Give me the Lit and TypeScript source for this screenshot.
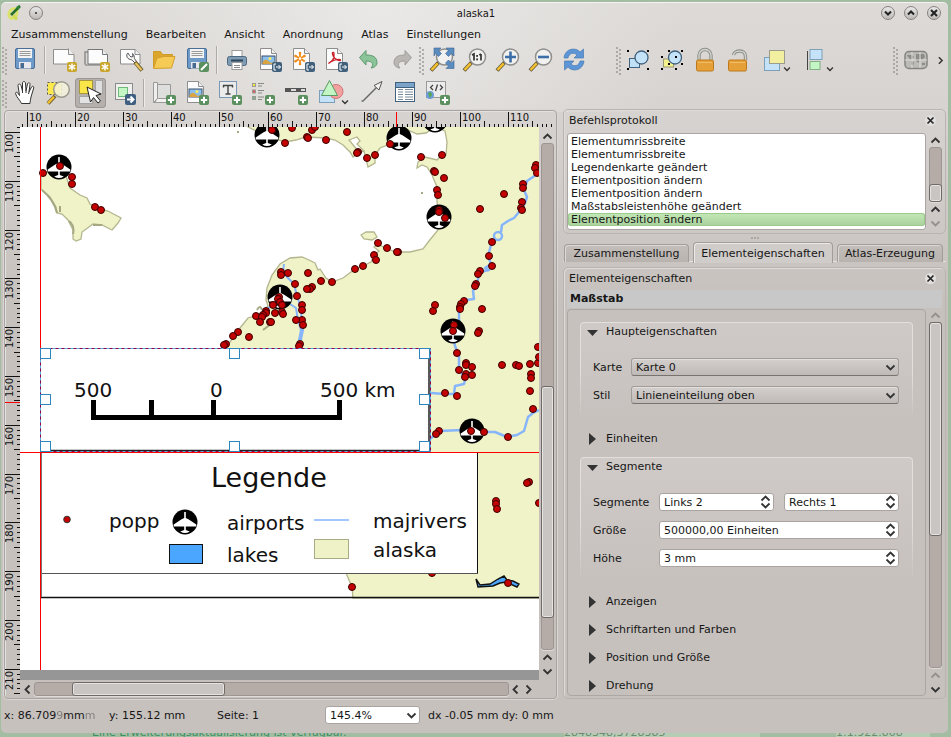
import { LitElement, html, svg, css } from "lit";
import { customElement, property } from "lit/decorators.js";
import { classMap } from "lit/directives/class-map.js";

/* ---------- icons (24 x 24) ---------- */

const plus = svg`<rect x="14" y="14" width="10" height="10" rx="2" fill="#5b8f5e"/><path d="M19 15.800v6.400M15.800 19h6.400" stroke="#fff" stroke-width="2"/>`;
const star = svg`<rect x="14" y="14" width="10" height="10" rx="2" fill="#c9a62c"/><path d="M19 15.500v7M15.800 17.200l6.400 3.600M22.200 17.200l-6.400 3.600" stroke="#fff" stroke-width="1.500"/>`;
const exportBadge = svg`<rect x="14" y="14" width="10" height="10" rx="2" fill="#41607c"/><path d="M18 16h-2v6h2M18 19h4.500M20.500 17l2 2-2 2" stroke="#fff" fill="none"/>`;
const page = svg`<path d="M2.500 .5h11l5 5v16h-16z" fill="#fcfcfc" stroke="#8d8d8d"/><path d="M13.500 .5v5h5" fill="#eee" stroke="#8d8d8d"/>`;
const disk = svg`<rect x="2.500" y=".5" width="19" height="20" rx="1.500" fill="#6d9ac8" stroke="#4a6d95"/><rect x="5" y="1" width="14" height="9" fill="#f3f3f3"/><path d="M6.500 3.500h11M6.500 5.500h11M6.500 7.500h11" stroke="#9a9a9a"/><rect x="6" y="14" width="12" height="6.500" fill="#e8e8ee"/><rect x="7.500" y="15" width="3.500" height="5" fill="#46698f"/>`;
const lens = (inner: unknown) => svg`<path d="M1 22.500l8-8.500" stroke="#5f5433" stroke-width="4"/><path d="M1.500 22l6.200-6.600" stroke="#f5c22e" stroke-width="2.400"/><circle cx="14.500" cy="9" r="8" fill="#f1f1ef" stroke="#8e8e8c" stroke-width="1.500"/>${inner}`;
const picture = svg`<rect x="4" y="8" width="13" height="8" fill="#8ac0ef" stroke="#38516b"/><path d="M4.500 14c3-4 5-2 7 0s4 0 5-1v3h-12z" fill="#d9a441"/><circle cx="12" cy="10.500" r="1.500" fill="#ffe95a"/>`;
const corners = (x: number, y: number, w: number, h: number) =>
  [[x, y], [x + w, y], [x, y + h], [x + w, y + h]].map(([a, b]) => svg`<rect x=${a - 1} y=${b - 1} width="2" height="2"/>`);

const ICONS: Record<string, unknown> = {
  save: disk,
  new: svg`<path d="M.5 1.500h15l5.500 5v9.500H.5z" fill="#fcfcfc" stroke="#8d8d8d"/><path d="M15.500 .5v6H21" fill="#eee" stroke="#8d8d8d"/>${star}`,
  duplicate: svg`<path d="M-1 16.500V4h3" fill="none" stroke="#8d8d8d" stroke-width="1.500"/><path d="M2 1.500h14.500l5 5v9.500H2z" fill="#fcfcfc" stroke="#777"/><path d="M16.500 1v5.500h5" fill="#eee" stroke="#777"/><path d="M-1 17h17" stroke="#777"/>${star}`,
  manage: svg`<path d="M1.500 1.500h15l4.500 5v9.500H1.500z" fill="#fcfcfc" stroke="#8d8d8d"/><path d="M16 1v5.500h5" fill="#eee" stroke="#8d8d8d"/><path d="M9 5c-2 1-1.500 5 1 6 2 1 3 .5 4 2l2 2 1.500-1.500-2-3C15 9 15.500 7 13.500 5.500l.5 3-2 .5-1.500-1.500z" fill="#f5f5f5" stroke="#555"/><path d="M16 14l7 8.500" stroke="#6d6034" stroke-width="4"/><path d="M16.500 15l6 7" stroke="#ecc65a" stroke-width="2"/>`,
  open: svg`<path d="M1.500 20V3.500h7l2 3h10V9" fill="#dca52c" stroke="#cf9a26"/><path d="M1.500 20.500L5 10l7-1.500h11L19.500 20z" fill="#f5ca55" stroke="#d3a02e"/>`,
  savetpl: svg`${disk}<rect x="14" y="14" width="10" height="10" rx="2" fill="#5b8f5e"/><path d="M16 22l6-6" stroke="#fff" stroke-width="2"/>`,
  print: svg`<rect x="7" y="2.500" width="10" height="7" fill="#fff" stroke="#9a9a9a"/><rect x="2.500" y="8.500" width="19" height="9" rx="2" fill="#7f9cb5" stroke="#4d687f"/><path d="M6 12.500h12" stroke="#2f4659" stroke-width="2"/><rect x="7" y="14.500" width="10" height="7" fill="#fff" stroke="#9a9a9a"/><path d="M9 17.500h6M9 19.500h6" stroke="#888"/>`,
  image: svg`${page}${picture}${exportBadge}`,
  svgout: svg`${page}<path d="M9 5v11M4.200 7.800l9.600 5.600M13.800 7.800l-9.600 5.600" stroke="#f08c1a" stroke-width="1.800"/><circle cx="9" cy="5" r="1.300" fill="#f08c1a"/><circle cx="9" cy="16" r="1.300" fill="#f08c1a"/><circle cx="4.500" cy="8" r="1.300" fill="#f08c1a"/><circle cx="13.500" cy="8" r="1.300" fill="#f08c1a"/><circle cx="4.500" cy="13.300" r="1.300" fill="#f08c1a"/><circle cx="9" cy="10.600" r="1.300" fill="#fff"/>${exportBadge}`,
  pdf: svg`${page}<path d="M4.500 15.500c4-2 6-6 5.500-10-.2-1.800-2-1.500-1.500.5 1 4 3.500 6 7 6.500 1.500.2 1.200-1.300-.5-1.200-4 .2-7.500 1.200-10.500 4.200z" fill="none" stroke="#c8202a" stroke-width="1.300"/>${exportBadge}`,
  undo: svg`<path d="M2.500 9.500L9 2.500V7c7 0 11 2 11 8 0 2.500-3 5-6 5 2.500-2.500 3-7-5-7v4z" fill="#8cc49a" stroke="#5d9a6d"/>`,
  redo: svg`<path d="M21.500 9.500L15 2.500V7C8 7 4 9 4 15c0 2.500 3 5 6 5-2.500-2.500-3-7 5-7v4z" fill="#b9b6b3" stroke="#a09d9a"/>`,
  zoomfull: svg`${lens("")}<path d="M4 0h7L8.500 2.500l3 3-3 3-3-3L4 8z M24 0v8l-2.500-2.500-3 3-3-3 3-3L16 0z M24 20.500h-8l2.500-2.500-3-3 3-3 3 3L24 12.500z" fill="#5a8cc0" stroke="#3c6796" stroke-width=".6"/>`,
  zoomone: svg`${lens(svg`<path d="M9 7l2-1v6.500M18 6v6.500M16.300 7l1.700-1" fill="none" stroke="#333" stroke-width="1.700"/><rect x="13.200" y="7" width="1.800" height="1.800" fill="#333"/><rect x="13.200" y="10.500" width="1.800" height="1.800" fill="#333"/>`)}`,
  zoomin: lens(svg`<path d="M14.500 3.500v11M9 9h11" stroke="#3c6ea8" stroke-width="2.600"/>`),
  zoomout: lens(svg`<path d="M9 9h11" stroke="#3c6ea8" stroke-width="2.600"/>`),
  refresh: svg`<path d="M2 10C3 0 14-1 18 4l3.500-3v9H12l3-3C12 4 7 5 6 10z" fill="#5d96d6" stroke="#3d70aa" stroke-width=".6"/><path d="M22 13c-1 10-12 11-16 6l-3.500 3v-9H12l-3 3c3 3 8 2 9-3z" fill="#5d96d6" stroke="#3d70aa" stroke-width=".6"/>`,
  group: svg`<rect x="2.500" y="10.500" width="10" height="9" fill="#bfe0f7" stroke="#41627e"/><circle cx="14.500" cy="9.500" r="6.500" fill="#c4e2f8" stroke="#41627e" stroke-width="1.300"/>${corners(1, 3, 20, 18)}`,
  ungroup: svg`<rect x="3.500" y="11" width="10" height="8" fill="#f5f08e" stroke="#9a9a70"/><circle cx="15" cy="9.500" r="6.500" fill="#c4e2f8" stroke="#41627e" stroke-width="1.300"/>${corners(9, 3, 13, 13)}${corners(2, 9, 14, 12)}`,
  lock: svg`<path d="M6 12V7.500a6 6 0 0 1 12 0V12" fill="none" stroke="#8f918b" stroke-width="3.400"/><path d="M6 12V7.500a6 6 0 0 1 12 0V12" fill="none" stroke="#d5d6d0" stroke-width="1.300"/><rect x="3.500" y="12" width="17" height="11" rx="1.500" fill="#e6a038" stroke="#bd7a1d"/><path d="M5 14.500h14" stroke="#f2bd68"/>`,
  unlock: svg`<path d="M7.500 7c1-5 12-6 12 1.500V12" fill="none" stroke="#8f918b" stroke-width="3.400"/><path d="M7.500 7c1-5 12-6 12 1.500V12" fill="none" stroke="#d5d6d0" stroke-width="1.300"/><rect x="2.500" y="12" width="18" height="11" rx="1.500" fill="#e6a038" stroke="#bd7a1d"/><path d="M4 14.500h15" stroke="#f2bd68"/>`,
  raise: svg`<rect x="1.500" y="9.500" width="15" height="13" fill="#c4e2f8" stroke="#7da0ba"/><rect x="6.500" y="2.500" width="15" height="13" fill="#f2f0a0" stroke="#9c9c8c"/>`,
  align: svg`<path d="M1.500 3v19" stroke="#444"/><rect x="4" y="1.500" width="12" height="10" fill="#c4e2f8" stroke="#7da0ba"/><rect x="4" y="13.500" width="10" height="8" fill="#c4f5c4" stroke="#83ad83"/>`,
  atlas: svg`<rect x="1" y="3.500" width="22" height="17" rx="4" fill="#bdbbb8" stroke="#858381" stroke-width="1.500"/><path d="M3 7h5l2 2-3 3-2-2zM7 13l3 1-1 4-2-2zM12 6h8l1 3-3 3-2-2-1 5-3-2zM18 15h3v2h-3z" fill="#8d8b88"/><path d="M8 4v16M16 4v16M1 12h22" stroke="#e0dedb"/>`,
  hand: svg`<path d="M8.500 22.500c-1-3-5-6-6-10 0-2 2-1.500 3 .5l1 1.500L5 4.500c0-2 2.500-2 3 0L9.500 10V2c0-2 2.800-2 3 0l.5 8 1.500-7c.5-2 2.800-1.500 2.500.5L16 11l2.500-5c1-1.500 2.800-.5 2.200 1L18 16c-.5 3-1 5-1 6.500z" fill="#fff" stroke="#333"/><path d="M9.500 10v2M13 10v2M16 11l-.5 2" stroke="#333"/>`,
  zoomtool: svg`<rect x="1.500" y="1.500" width="14" height="12" fill="#fbe94e" stroke="#555" stroke-dasharray="2 2"/><path d="M2 22.500l7-7.500" stroke="#6d5c30" stroke-width="4"/><path d="M2 22.300l6-6.500" stroke="#f5c22e" stroke-width="2.400"/><circle cx="15.500" cy="8.500" r="7.800" fill="#f3f1dc" fill-opacity=".88" stroke="#9b9a8e" stroke-width="1.500"/>`,
  select: svg`<rect x=".5" y="-.5" width="13" height="13" fill="#fbe64a" stroke="#a6983a"/><rect x="16.500" y="-.5" width="7" height="13" fill="#dedede" stroke="#a3a3a3"/><rect x=".5" y="15.500" width="13" height="7" fill="#e2e2e2" stroke="#a3a3a3"/><path d="M8 6l3.500 15 3-4.500 4.500 5.500 2.500-2-4.500-5.500 5-1.500z" fill="#fff" stroke="#222"/>`,
  move: svg`<rect x="3.500" y="2.500" width="17" height="16" fill="#f0f0ee" stroke="#8a8a8a"/><rect x="6.500" y="6.500" width="9" height="9" fill="#c4f7c4" stroke="#6fb77a"/><rect x="13" y="13" width="11" height="11" rx="2" fill="#3e5f80"/><path d="M15 18.500h6M18.500 15.500l3 3-3 3" fill="none" stroke="#fff" stroke-width="2"/>`,
  addmap: svg`<path d="M1.500 1.500h4v17h-1l-3 3z" fill="#eeeeec" stroke="#999"/><path d="M5.500 3.500h13v14h-13z" fill="#dededc" stroke="#999"/><path d="M1.500 21.500c4 0 1-4 5-4h9v4z" fill="#f2f2f0" stroke="#999"/>${plus}`,
  addimage: svg`${page}${picture}${plus}`,
  addlabel: svg`<rect x="1.500" y=".5" width="17" height="16" fill="#ececec" stroke="#7c98b3"/><path d="M5.500 6.500v-2h9v2M10 4.500v8.500M7.500 13h5" fill="none" stroke="#444" stroke-width="1.400"/>${plus}`,
  addlegend: svg`<rect x="1.500" y="2.500" width="3" height="3" fill="#f4ea3b" stroke="#999"/><rect x="1.500" y="9" width="3" height="3" fill="#e05555" stroke="#999"/><rect x="1.500" y="15.500" width="3" height="3" fill="#7fb285" stroke="#999"/><path d="M7 2.500h6M7 5h4M7 9.500h6M7 12h4M7 16h6M7 18.500h4" stroke="#888"/>${plus}`,
  addscale: svg`<rect x="1.500" y="7.500" width="20" height="3" fill="#ddd" stroke="#555"/><path d="M2 9h5M12 9h5" stroke="#555" stroke-width="2"/>${plus}`,
  shape: svg`<rect x="-1.500" y="9.500" width="15" height="12" fill="#c4e2f8" stroke="#7da0ba"/><circle cx="15" cy="10.500" r="7" fill="#f2a0a0" stroke="#d07575"/><path d="M8.500-.5L16.500 14.500H.5z" fill="#c4f5c4" stroke="#579a62"/>`,
  arrow: svg`<path d="M3 20L18 5" stroke="#666" stroke-width="1.500"/><path d="M22 .5l-3 8.500-5-4.500z" fill="#f2f2f2" stroke="#555"/><rect x="1.500" y="19" width="2" height="2" fill="#888"/>`,
  table: svg`<rect x="2.500" y="1.500" width="19" height="19" fill="#fff" stroke="#41627e"/><rect x="3" y="2" width="18" height="4" fill="#7ba4ca"/><path d="M5 8.500h5M5 11h5M5 13.500h5M5 16h5M5 18.500h5M12 8.500h8M12 11h8M12 13.500h8M12 16h8M12 18.500h8" stroke="#7a8a9a"/><path d="M3 6.500h18" stroke="#41627e"/>`,
  addhtml: svg`<rect x=".5" y=".5" width="19" height="16" fill="#ececec" stroke="#999"/><path d="M7 4L4.500 6.500 7 9M14 4l2.500 2.500L14 9M11.500 3.500l-2 6.500" fill="none" stroke="#444" stroke-width="1.300"/><circle cx="4" cy="14" r="4" fill="#6f9cd8"/><path d="M2 12l3-1 1 3-2 3z" fill="#57a84e"/>${plus}`,
};

const CHEVRON: Record<string, string> = {
  up: "M1.500 7.500L5.500 3.500L9.500 7.500",
  down: "M1.500 3.500L5.500 7.500L9.500 3.500",
  left: "M7.500 1.500L3.500 5.500L7.500 9.500",
  right: "M3.500 1.500L7.500 5.500L3.500 9.500",
};
const chevron = (dir: string, faint = false, size = 11) => html`<svg width=${size} height=${size} viewBox="0 0 11 11" aria-hidden="true">
  <path d=${CHEVRON[dir]} fill="none" stroke=${faint ? "#96918e" : "#333"} stroke-width="1.800"/></svg>`;

/* ---------- map data ---------- */

const TOWNS: number[][] = [
  [43,173],[60,166],[72,177],[72,184],[95,207],[101,210],[272,130],[256,316],[266,311],[266,313],[263,315],[262,317],[260,322],
  [270,322],[238,332],[233,336],[249,337],[226,344],[224,345],[275,313],[292,128],[312,130],[315,127],[285,143],[307,137],[308,138],
  [326,140],[347,132],[358,152],[357,153],[367,158],[375,155],[390,144],[421,157],[442,155],[434,171],[435,172],[444,178],[437,190],
  [438,195],[439,210],[439,212],[445,218],[480,209],[504,194],[536,165],[535,168],[537,173],[523,184],[523,188],[522,202],[521,208],
  [522,210],[492,242],[489,256],[492,266],[480,271],[478,274],[476,284],[475,286],[464,301],[461,304],[460,307],[460,309],[482,309],
  [435,305],[433,311],[454,325],[453,331],[479,331],[478,333],[457,353],[538,347],[378,243],[387,248],[398,252],[397,252],[374,255],
  [376,260],[363,266],[355,269],[332,282],[321,281],[308,273],[312,287],[310,289],[307,289],[288,273],[281,272],[281,275],[295,284],
  [297,296],[302,305],[302,310],[302,320],[296,320],[303,325],[300,344],[299,346],[279,297],[278,299],[280,302],[282,305],[273,305],
  [282,312],[283,314],[271,322],[459,370],[466,363],[466,365],[472,367],[466,374],[465,377],[472,375],[445,393],[457,396],[502,365],
  [516,365],[519,366],[530,364],[538,363],[539,357],[531,374],[531,378],[530,391],[533,409],[508,437],[484,432],[471,431],[439,431],
  [436,434],[529,482],[527,483],[496,501],[496,504],[497,509],[539,503],[432,573],[352,587],
];
const AIRPORTS: number[][] = [[59, 167], [267, 135], [399, 138], [435, 120], [439, 217], [280, 297], [453, 331], [472, 431]];

const airport = ([x, y]: number[]) => svg`<g transform="translate(${x} ${y})">
  <circle r="12.500" fill="#000"/>
  <path d="M-.8-10h1.600v6l3 1.500 7.500 5v2H-11.300v-2l7.500-5 3-1.500zM-.8 4H.8v4l4 1.500q-4.800 3-9.600 0l4-1.500z" fill="#fff"/></g>`;

const HANDLES = [41, 230, 420].flatMap((x) => [349, 395, 442].map((y) => [x, y])).filter(([x, y]) => !(x === 230 && y === 395));

const mapSvg = svg`
<g transform="translate(-20 -127)">
  <rect x="20" y="127" width="100%" height="543" fill="#fff"/>
  <g fill="#f0f3c8" stroke="#b4b68e" stroke-width="1.300">
    <path d="M248 127L256 131 267 138 276 139 285 142 296 140 306 137 326 138 335 140 343 145 350 152 353 157 357 154 364 151 366 159 368 167 375 163 375 155 380 148 390 144 399 138 408 130 417 134 426 133 435 127 445 131 447 142 446 155 440 157 437 160 425 157 418 162 417 168 422 165 427 167 432 175 437 187 437 202 440 217 438 230 429 241 423 249 410 252 397 252 387 249 378 244 374 247 379 251 374 255 371 262 363 266 355 269 343 278 332 282 326 278 320 269 318 270 315 263 309 260 302 257 290 258 280 264 272 275 267 288 266 300 268 306 258 315 248 318 240 328 230 342 222 349 340 560 346 573 352 587 353 598 H1600 V120 H248z"/>
    <path d="M41 172L52 172 66 176 70 188 80 195 87 198 90 204 100 209 108 211 121 218 118 223 112 230 102 225 93 224 82 232 81 239 76 241 73 239 73 230 68 220 62 214 57 213 56 207 50 197 41 189z"/>
    <path d="M361 235L366 232 374 232 377 237 372 240 364 239z"/>
    <path d="M349 140L357 137 360 141 357 144 363 150 360 153 354 146z" fill="#fff"/>
  </g>
  <path d="M42 190Q54 200 57 213M60 206v6M69 221q6 5 4 13M93 225h9M257 310q3-6 5 0M263 330l8-6M422 192v2M238 131v2" fill="none" stroke="#a5a883" stroke-width="2"/>
  <g fill="none" stroke="#86b5fb" stroke-width="2.500" stroke-linejoin="round">
    <path d="M539 173L527 181 524 190 527 197 525 203 519 212 514 218 508 221 502 225 501 232 M498 236m-4 0a4 4 0 1 0 8 0a4 4 0 1 0 -8 0 M495 240L491 245 488 256 491 264 485 268 489 270 480 272 476 286 473 291 474 299 466 300 462 304 459 311 459 326 453 335 455 346 459 356 459 368 465 380 464 384 455 386 454 394 445 394 431 393"/>
    <path d="M430 439L440 431 462 430 484 432 495 432 507 437 517 435 524 431 528 417 533 413 539 410"/>
    <path d="M284 264L283 272 287 277 294 284 297 296 300 305 302 320 303 330 300 345M290 304L296 308 298 320 301 330 298 345" stroke-width="2"/>
    <path d="M267 309l7-5 6 4" stroke-width="2"/>
  </g>
  <path d="M476 579L480 585 490 584 498 579 504 576 507 580 513 581 519 584 517 587 506 582 500 583 493 586 478 587z" fill="#4ba6ff" stroke="#111" stroke-width="1.400"/>
  ${AIRPORTS.map(airport)}
  <g fill="#c40000" stroke="#3a0000">
    ${TOWNS.map(([x, y]) => svg`<circle cx=${x} cy=${y} r="3.500"/>`)}
    <circle cx="508" cy="583" r="3.500"/>
  </g>
  <path d="M41 597.500H1600" stroke="#111" stroke-width="1.500"/>
  <path d="M41.500 574v23" stroke="#777"/>

  <rect x="41" y="452" width="437" height="122" fill="#fff"/>
  <path d="M477.500 452v121" stroke="#111"/><path d="M41 573.500h437" stroke="#555"/><path d="M41.500 452v122" stroke="#777"/>
  <g class="t20">
    <text class="t27" x="211" y="487">Legende</text>
    <text x="109" y="528">popp</text><text x="227" y="530">airports</text><text x="373" y="528">majrivers</text>
    <text x="227" y="562">lakes</text><text x="373" y="557">alaska</text>
  </g>
  <circle cx="67" cy="519.500" r="3.300" fill="#c40000" stroke="#333"/>
  ${airport([185, 522])}
  <rect x="169.500" y="544.500" width="33" height="19" fill="#4ba6ff" stroke="#111"/>
  <path d="M314 520h35" stroke="#a3c8ff" stroke-width="2"/>
  <rect x="314.500" y="539.500" width="34" height="19" fill="#eff1c6" stroke="#a9ab85"/>

  <rect x="41" y="349" width="389" height="103" fill="#fff"/>
  <path d="M41 450.500h389M429 349v103" stroke="#222" stroke-width="1.500"/>
  <g class="t20"><text x="74" y="397">500</text><text x="210" y="397">0</text><text x="320" y="397">500 km</text></g>
  <path d="M91 415H342V420H91zM91 400h5v18h-5zM149 400h5v18h-5zM211 400h5v18h-5zM337 400h5v18h-5z"/>
  <rect x="20" y="452" width="100%" height="1" fill="#f00"/>
  <rect x="40" y="127" width="1" height="543" fill="#f00"/>
  <rect x="40.500" y="348.500" width="390" height="103" fill="none" stroke="#900040"/>
  <rect x="40.500" y="348.500" width="390" height="103" fill="none" stroke="#5ab0e0" stroke-dasharray="3 3"/>
  ${HANDLES.map(([x, y]) => svg`<rect x=${x - 0.5} y=${y - 0.5} width="10" height="10" fill="#fff" stroke="#2f86bf"/>`)}
</g>`;

const range = (from: number, to: number) => Array.from({ length: to - from + 1 }, (_, i) => from + i);
const tickLength = (k: number) => (k % 10 === 0 ? 15 : k % 5 === 0 ? 6 : 3);

const topRuler = svg`<g transform="translate(-5 -111)">
  <g stroke="#111">${range(-1, 109).map((k) => {
    const x = Math.round(27 + k * 4.81) + 0.5;
    return svg`<path d="M${x} 127v${-tickLength(k)}"/>`;
  })}</g>
  ${range(0, 10).map((i) => svg`<text class="t10" x=${Math.round(29 + i * 48.1)} y="121">${10 + i * 10}</text>`)}
  <rect x="396" y="112" width="1" height="15" fill="#f00"/></g>`;

const leftRuler = svg`<g transform="translate(-5 -127)">
  <g stroke="#111">${range(-1, 115).map((k) => {
    const y = Math.round(132 + k * 4.88) + 0.5;
    return svg`<path d="M20 ${y}h${-tickLength(k)}"/>`;
  })}</g>
  ${range(0, 11).map((i) => {
    const y = Math.round(153 + i * 48.8);
    return svg`<text class="t10" x="13" y=${y} transform="rotate(-90 13 ${y})">${100 + i * 10}</text>`;
  })}
  <rect x="5" y="402" width="15" height="1" fill="#f00"/></g>`;

/* ---------- small parts ---------- */

const shared = css`
  * { box-sizing: border-box; }
  svg { display: block; flex: none; overflow: visible; }
  button, input, select { font: inherit; color: inherit; margin: 0; padding: 0; border: 0; background: none; }
`;

@customElement("tool-row")
class ToolRow extends LitElement {
  @property({ attribute: false }) items: string[] = [];
  static styles = [shared, css`
    :host { display: flex; align-items: center; height: 32px; }
    .tool { width: 33px; height: 30px; flex: none; display: flex; align-items: center; justify-content: center; border-radius: 4px; }
    .menu { width: 43px; justify-content: flex-start; padding-left: 9px; }
    .active { background: #b5b0ac; box-shadow: inset 0 0 0 1px #9b9693; width: 31px; margin: 0 1px; }
    .sep { width: 1px; height: 28px; margin: 0 3px; background: #aeaaa7; box-shadow: 1px 0 #efedec; }
    .grip { width: 7px; height: 28px; flex: none; }
    .gap { width: 25px; }
    .fill { flex: 1; }
    .more { width: 16px; display: flex; justify-content: center; }
    .tip { align-self: flex-end; margin: 0 0 2px -4px; }
  `];
  render() {
    return this.items.map((item) => {
      if (item === "|") return html`<span class="sep"></span>`;
      if (item === "gap") return html`<span class="gap"></span>`;
      if (item === "fill") return html`<span class="fill"></span>`;
      if (item === "more") return html`<button class="more" aria-label="Mehr">${chevron("right", false, 9)}</button>`;
      if (item === ":") return html`<svg class="grip" aria-hidden="true">${range(0, 6).map((i) => svg`
        <circle cx="2" cy=${2 + i * 4} r="1" fill="#9c9895"/><circle cx="5" cy=${4 + i * 4} r="1" fill="#9c9895"/>`)}</svg>`;
      const [name, flag] = item.split(":");
      return html`<button class=${classMap({ tool: true, active: flag === "on", menu: flag === "menu" })} aria-label=${name}>
        <svg width="24" height="24" viewBox="0 0 24 24" aria-hidden="true">${ICONS[name]}</svg>
        ${flag === "menu" ? html`<span class="tip">${chevron("down", false, 8)}</span>` : ""}
      </button>`;
    });
  }
}

@customElement("scroll-bar")
class ScrollBar extends LitElement {
  @property({ type: Boolean, reflect: true }) horizontal = false;
  @property({ type: Number }) before = 0;
  @property({ type: Number }) size = 1;
  @property({ type: Number }) after = 0;
  @property() faint = "";
  static styles = [shared, css`
    :host { display: flex; flex-direction: column; align-items: center; width: 14px; }
    :host([horizontal]) { flex-direction: row; width: auto; height: 14px; }
    button { width: 13px; height: 14px; flex: none; display: flex; align-items: center; justify-content: center; }
    .groove { flex: 1; display: flex; flex-direction: inherit; width: 13px; min-height: 0; background: #b5aca8; border: 1px solid #9c9592; border-radius: 3px; box-shadow: 0 1px #dedbd9; }
    :host([horizontal]) .groove { width: auto; height: 14px; }
    .thumb { border-radius: 3px; border: 1px solid #6f6a67; background: #c9c5c2; box-shadow: inset 0 0 0 1px #e6e4e3; margin: -1px; }
  `];
  render() {
    const [back, fwd] = this.horizontal ? ["left", "right"] : ["up", "down"];
    return html`<button aria-label="Zurück">${chevron(back, this.faint === "start")}</button>
      <div class="groove">
        <div style="flex:${this.before}"></div><div class="thumb" style="flex:${this.size}"></div><div style="flex:${this.after}"></div>
      </div>
      <button aria-label="Zurück">${chevron(back, this.faint === "start")}</button>
      <button aria-label="Weiter">${chevron(fwd, this.faint === "end")}</button>`;
  }
}

@customElement("prop-group")
class PropGroup extends LitElement {
  @property() heading = "";
  @property({ type: Boolean, reflect: true }) open = false;
  static styles = [shared, css`
    :host { display: block; padding-left: 1px; }
    :host([open]) { padding-bottom: 15px; border-radius: 4px; background: linear-gradient(#cfcac7, #c6c1bd); position: relative; }
    :host([open])::before { content: ""; position: absolute; inset: 0; border: 1px solid #e2dfdd; border-bottom: 0; border-radius: 4px; pointer-events: none; mask-image: linear-gradient(#000 50%, transparent); }
    .head { display: flex; align-items: center; gap: 8px; width: 100%; height: 18px; padding-left: 6px; text-align: left; }
    .body { padding: 18px 14px 0 12px; }
  `];
  render() {
    return html`<button class="head" aria-expanded=${this.open}>
        <svg width="11" height="11" viewBox="0 0 11 11" aria-hidden="true"><path d=${this.open ? "M0 4H11L5.500 10z" : "M2 0L9 6L2 12z"} fill="#333"/></svg>
        ${this.heading}
      </button>
      ${this.open ? html`<div class="body"><slot></slot></div>` : ""}`;
  }
}

/* ---------- application ---------- */

@customElement("app-root")
export class AppRoot extends LitElement {
  static styles = [shared, css`
    :host { box-sizing: border-box; display: flex; flex-direction: column; height: 100vh; padding: 2px 3px 0 1px; background: #a3bda2; overflow: hidden;
      font: 11px/13px "DejaVu Sans", sans-serif; color: #161616; }
    .window { flex: 1; min-height: 0; display: flex; flex-direction: column; border-radius: 5px; box-shadow: inset 0 1px #f4f3f2;
      background: radial-gradient(circle at 40% 0, #edecebcc, #edeceb00 300px) top / 100% 110px no-repeat, linear-gradient(#dddad7, #d6d2cf 120px, #c6c1bd 300px); }
    .title { display: flex; align-items: center; height: 22px; padding: 0 7px 0 6px; gap: 7px; }
    .title h1 { flex: 1; margin: 0; padding-left: 28px; font-size: 10px; font-weight: 400; text-align: center; }
    .title .mid { display: flex; gap: 9px; }
    .round { width: 14px; height: 14px; border-radius: 50%; display: flex; align-items: center; justify-content: center; border: 1px solid #85817e; background: linear-gradient(#e9e8e7, #bdb9b6); }
    .menu { display: flex; height: 20px; align-items: center; padding-left: 10px; gap: 18px; }
    .bars { display: grid; gap: 1px; }
    .main { flex: 1; min-height: 0; display: grid; grid-template-columns: minmax(0, 1fr) 383px; gap: 6px; padding: 0 2px 0 3px; }
    .canvas { margin-top: 1px; display: grid; grid-template: 16px minmax(0, 1fr) 18px / 15px minmax(0, 1fr) 17px; border: 1px solid #a9a4a1; border-radius: 4px; box-shadow: inset 1px 1px #e4e2e0, 0 0 0 1px #d9d6d3; overflow: hidden; }
    .canvas svg { overflow: hidden; width: 100%; height: 100%; }
    .rtop { grid-area: 1 / 1 / 2 / 4; min-width: 0; }
    .rleft { grid-area: 2 / 1 / 4 / 2; min-height: 0; }
    .view { grid-area: 2 / 2 / 3 / 3; background: #969696; min-height: 0; }
    .vbar { grid-area: 2 / 3 / 3 / 4; padding: 2px 0 2px 1px; }
    .hbar { grid-area: 3 / 2 / 4 / 4; padding: 2px 21px 0 1px; }
    .vbar scroll-bar { height: 100%; }
    text { font-family: "DejaVu Sans", sans-serif; fill: #111; }
    .t10 { font-size: 10px; }
    .t20 { font-size: 20px; }
    .t20 .t27 { font-size: 27px; }

    .right { display: flex; flex-direction: column; min-height: 0; }
    .dock { border: 1px solid #b9b4b0; border-radius: 5px; box-shadow: inset 1px 1px #dedbd8; padding: 0 3px 2px; display: flex; flex-direction: column; min-height: 0; }
    .dock h2 { margin: 0; font-size: 11px; font-weight: 400; height: 20px; display: flex; align-items: center; justify-content: space-between; padding: 0 6px 0 2px; }
    .close { width: 11px; height: 11px; border-radius: 50%; background: #e2e0de; }
    .log { height: 125px; }
    .rowbox { flex: 1; min-height: 0; display: flex; gap: 2px; }
    .list { flex: 1; margin: 3px 0 1px; padding: 1px 0 0; list-style: none; background: #fff; border: 1px solid #aaa5a2; border-radius: 3px; }
    .list li { padding-left: 3px; }
    .list .sel { border-radius: 3px; background: linear-gradient(#c3e8b6, #a9d19b); box-shadow: inset 0 0 0 1px #9cca8d; }
    .log scroll-bar { margin: 3px 0 1px; }
    .split { height: 8px; display: flex; justify-content: center; align-items: center; gap: 1px; }
    .split i { width: 2px; height: 2px; background: #a19c99; border-radius: 50%; }
    .tabs { display: grid; grid-template-columns: 125fr 140fr 106fr; align-items: end; gap: 4px; height: 20px; padding: 0 3px 0 1px; border-bottom: 1px solid #e6e4e2; }
    .tab { height: 18px; min-width: 0; border: 1px solid #a29d99; border-bottom: 0; border-radius: 4px 4px 0 0; background: linear-gradient(#c3beba, #b9b3af); box-shadow: inset 1px 1px #dbd8d5; white-space: nowrap; }
    .tab.on { height: 21px; margin-bottom: -1px; background: #d0ccc9; box-shadow: inset 1px 1px #eceae9; }
    .props { flex: 1; margin-top: 5px; }
    .props h3 { margin: 2px 0 0; font-size: 11px; height: 18px; line-height: 18px; padding-left: 3px; background: #c8c8c8; }
    .area { flex: 1; margin-top: 1px; border: 1px solid #ada7a3; border-radius: 4px; padding: 12px 12px 0; display: flex; flex-direction: column; gap: 10px; overflow: hidden; }
    .area prop-group { flex: none; }
    .form { display: grid; grid-template-columns: 38px minmax(0, 1fr); row-gap: 10px; align-items: center; }
    .form.wide { grid-template-columns: 66px minmax(0, 1fr); }
    .pair { display: grid; grid-template-columns: 1fr 1fr; gap: 10px; }
    .field { position: relative; display: block; }
    .field select, .field input { display: block; width: 100%; height: 18px; padding: 0 18px 0 4px; border-radius: 3px; appearance: none; }
    .field select { background: linear-gradient(#d3cfcc, #bfbab7); border: 1px solid #a19c98; border-bottom-color: #78736f; box-shadow: inset 0 1px #e2e0de; }
    .field input, .field.white select { background: #fff; border: 1px solid #a9a4a1; box-shadow: none; }
    .field .mark { position: absolute; right: 3px; top: 4px; pointer-events: none; }
    .field .spin { top: 1px; }
    .status { display: flex; align-items: center; height: 34px; padding: 0 3px 2px; }
    .status .c1 { width: 105px; }
    .status .c2 { width: 108px; }
    .fade { opacity: .4; }
    .zoom { width: 95px; margin-right: 8px; }
    .below { height: 4px; display: flex; overflow: hidden; padding-left: 91px; color: #6c8b70; }
    .below a { color: #3d8f63; width: 472px; white-space: nowrap; line-height: 0; }
    .below span { background: #b5cdb5; width: 196px; line-height: 0; margin-right: 76px; }
    .below span + span { width: 94px; margin: 0; }
  `];

  private spin(id: string, value: string, label: string) {
    return html`<span class="field"><input id=${id} value=${value} aria-label=${label}>
      <svg class="mark spin" width="11" height="16" viewBox="0 0 11 16" aria-hidden="true"><path d="M1.500 6.500l4-4 4 4M1.500 9.500l4 4 4-4" fill="none" stroke="#333" stroke-width="1.800"/></svg></span>`;
  }
  private combo(id: string, value: string, extra: string, label: string) {
    return html`<span class="field ${extra}"><select id=${id} aria-label=${label}><option>${value}</option></select>
      <span class="mark">${chevron("down")}</span></span>`;
  }
  private cross() {
    return html`<button class="close" aria-label="Schließen"><svg width="11" height="11" viewBox="0 0 11 11"><path d="M2.500 2.500l6 6M8.500 2.500l-6 6" stroke="#222" stroke-width="1.600"/></svg></button>`;
  }

  render() {
    const log = ["Elementumrissbreite", "Elementumrissbreite", "Legendenkarte geändert", "Elementposition ändern",
      "Elementposition ändern", "Maßstabsleistenhöhe geändert", "Elementposition ändern"];
    const title = ["M4 5.500l3 3 3-3", "M4 8.500l3-3 3 3", "M4 4l6 6M10 4l-6 6"];
    return html`
    <div class="window">
      <header class="title">
        <svg width="15" height="16" viewBox="0 0 15 16" aria-hidden="true">
          <ellipse cx="6" cy="8.500" rx="3.800" ry="5" transform="rotate(25 6 8.500)" fill="none" stroke="#d9e36a" stroke-width="3"/>
          <path d="M6 10l4 4.500" stroke="#d0dc58" stroke-width="3"/><path d="M4 10L13 1" stroke="#26702c" stroke-width="2.600"/><path d="M13 0l-1 5-3-3z" fill="#2e8235"/></svg>
        <button class="round" aria-label="Fenstermenü"><svg width="2" height="2"><rect width="2" height="2" fill="#555"/></svg></button>
        <h1>alaska1</h1>
        <div class="mid">${title.map((d, i) => html`<button class="round" aria-label=${["Minimieren", "Maximieren", "Schließen"][i]}>
          <svg width="14" height="14" viewBox="0 0 14 14"><path d=${d} fill="none" stroke="#222" stroke-width="2"/></svg></button>`)}</div>
      </header>
      <nav class="menu">${["Zusammmenstellung", "Bearbeiten", "Ansicht", "Anordnung", "Atlas", "Einstellungen"].map((m) => html`<button>${m}</button>`)}</nav>
      <div class="bars">
        <tool-row .items=${[":", "save", "|", "new", "duplicate", "manage", "open", "savetpl", "|", "print", "image", "svgout", "pdf", "undo", "redo", ":", "zoomfull", "zoomone", "zoomin", "zoomout", "refresh", "gap", ":", "group", "ungroup", "lock", "unlock", "raise:menu", "align:menu", "fill", ":", "atlas", "more"]}></tool-row>
        <tool-row .items=${[":", "hand", "zoomtool", "select:on", "move", "|", "addmap", "addimage", "addlabel", "addlegend", "addscale", "shape:menu", "arrow", "table", "addhtml"]}></tool-row>
      </div>

      <main class="main">
        <section class="canvas" aria-label="Zeichenfläche">
          <div class="rtop"><svg>${topRuler}</svg></div>
          <div class="rleft"><svg>${leftRuler}</svg></div>
          <div class="view"><svg>${mapSvg}</svg></div>
          <div class="vbar"><scroll-bar before="244" size="232" after="32"></scroll-bar></div>
          <div class="hbar"><scroll-bar horizontal before="38" size="151" after="285"></scroll-bar></div>
        </section>

        <div class="right">
          <section class="dock log">
            <h2>Befehlsprotokoll ${this.cross()}</h2>
            <div class="rowbox">
              <ul class="list">${log.map((t, i) => html`<li class=${classMap({ sel: i === log.length - 1 })}>${t}</li>`)}</ul>
              <scroll-bar before="39" size="17" after="0" faint="end"></scroll-bar>
            </div>
          </section>
          <div class="split"><i></i><i></i><i></i></div>
          <div class="tabs" role="tablist">
            <button class="tab" role="tab">Zusammenstellung</button>
            <button class="tab on" role="tab" aria-selected="true">Elementeigenschaften</button>
            <button class="tab" role="tab">Atlas-Erzeugung</button>
          </div>
          <section class="dock props">
            <h2>Elementeigenschaften ${this.cross()}</h2>
            <h3>Maßstab</h3>
            <div class="rowbox">
              <div class="area">
                <prop-group heading="Haupteigenschaften" open>
                  <div class="form">
                    <label for="map">Karte</label>${this.combo("map", "Karte 0", "", "Karte")}
                    <label for="style">Stil</label>${this.combo("style", "Linieneinteilung oben", "", "Stil")}
                  </div>
                </prop-group>
                <prop-group heading="Einheiten"></prop-group>
                <prop-group heading="Segmente" open>
                  <div class="form wide">
                    <label for="left">Segmente</label>
                    <div class="pair">${this.spin("left", "Links 2", "Segmente links")}${this.spin("rightseg", "Rechts 1", "Segmente rechts")}</div>
                    <label for="size">Größe</label>${this.spin("size", "500000,00 Einheiten", "Größe")}
                    <label for="height">Höhe</label>${this.spin("height", "3 mm", "Höhe")}
                  </div>
                </prop-group>
                ${["Anzeigen", "Schriftarten und Farben", "Position und Größe", "Drehung"].map((h) => html`<prop-group heading=${h}></prop-group>`)}
              </div>
              <scroll-bar before="0" size="213" after="132" faint="start"></scroll-bar>
            </div>
          </section>
        </div>
      </main>

      <footer class="status">
        <span class="c1">x: 86.709<span class="fade">9</span>mm<span class="fade">m</span></span>
        <span class="c2">y: 155.12 mm</span>
        <span class="c2">Seite: 1</span>
        <span class="zoom">${this.combo("zoom", "145.4%", "white", "Zoomstufe")}</span>
        <span>dx -0.05 mm dy: 0 mm</span>
      </footer>
    </div>
    <div class="below"><a href="#">Eine Erweiterungsaktualisierung ist verfügbar.</a><span>2848348,3728385</span><span>1:1.922.808</span></div>`;
  }
}
